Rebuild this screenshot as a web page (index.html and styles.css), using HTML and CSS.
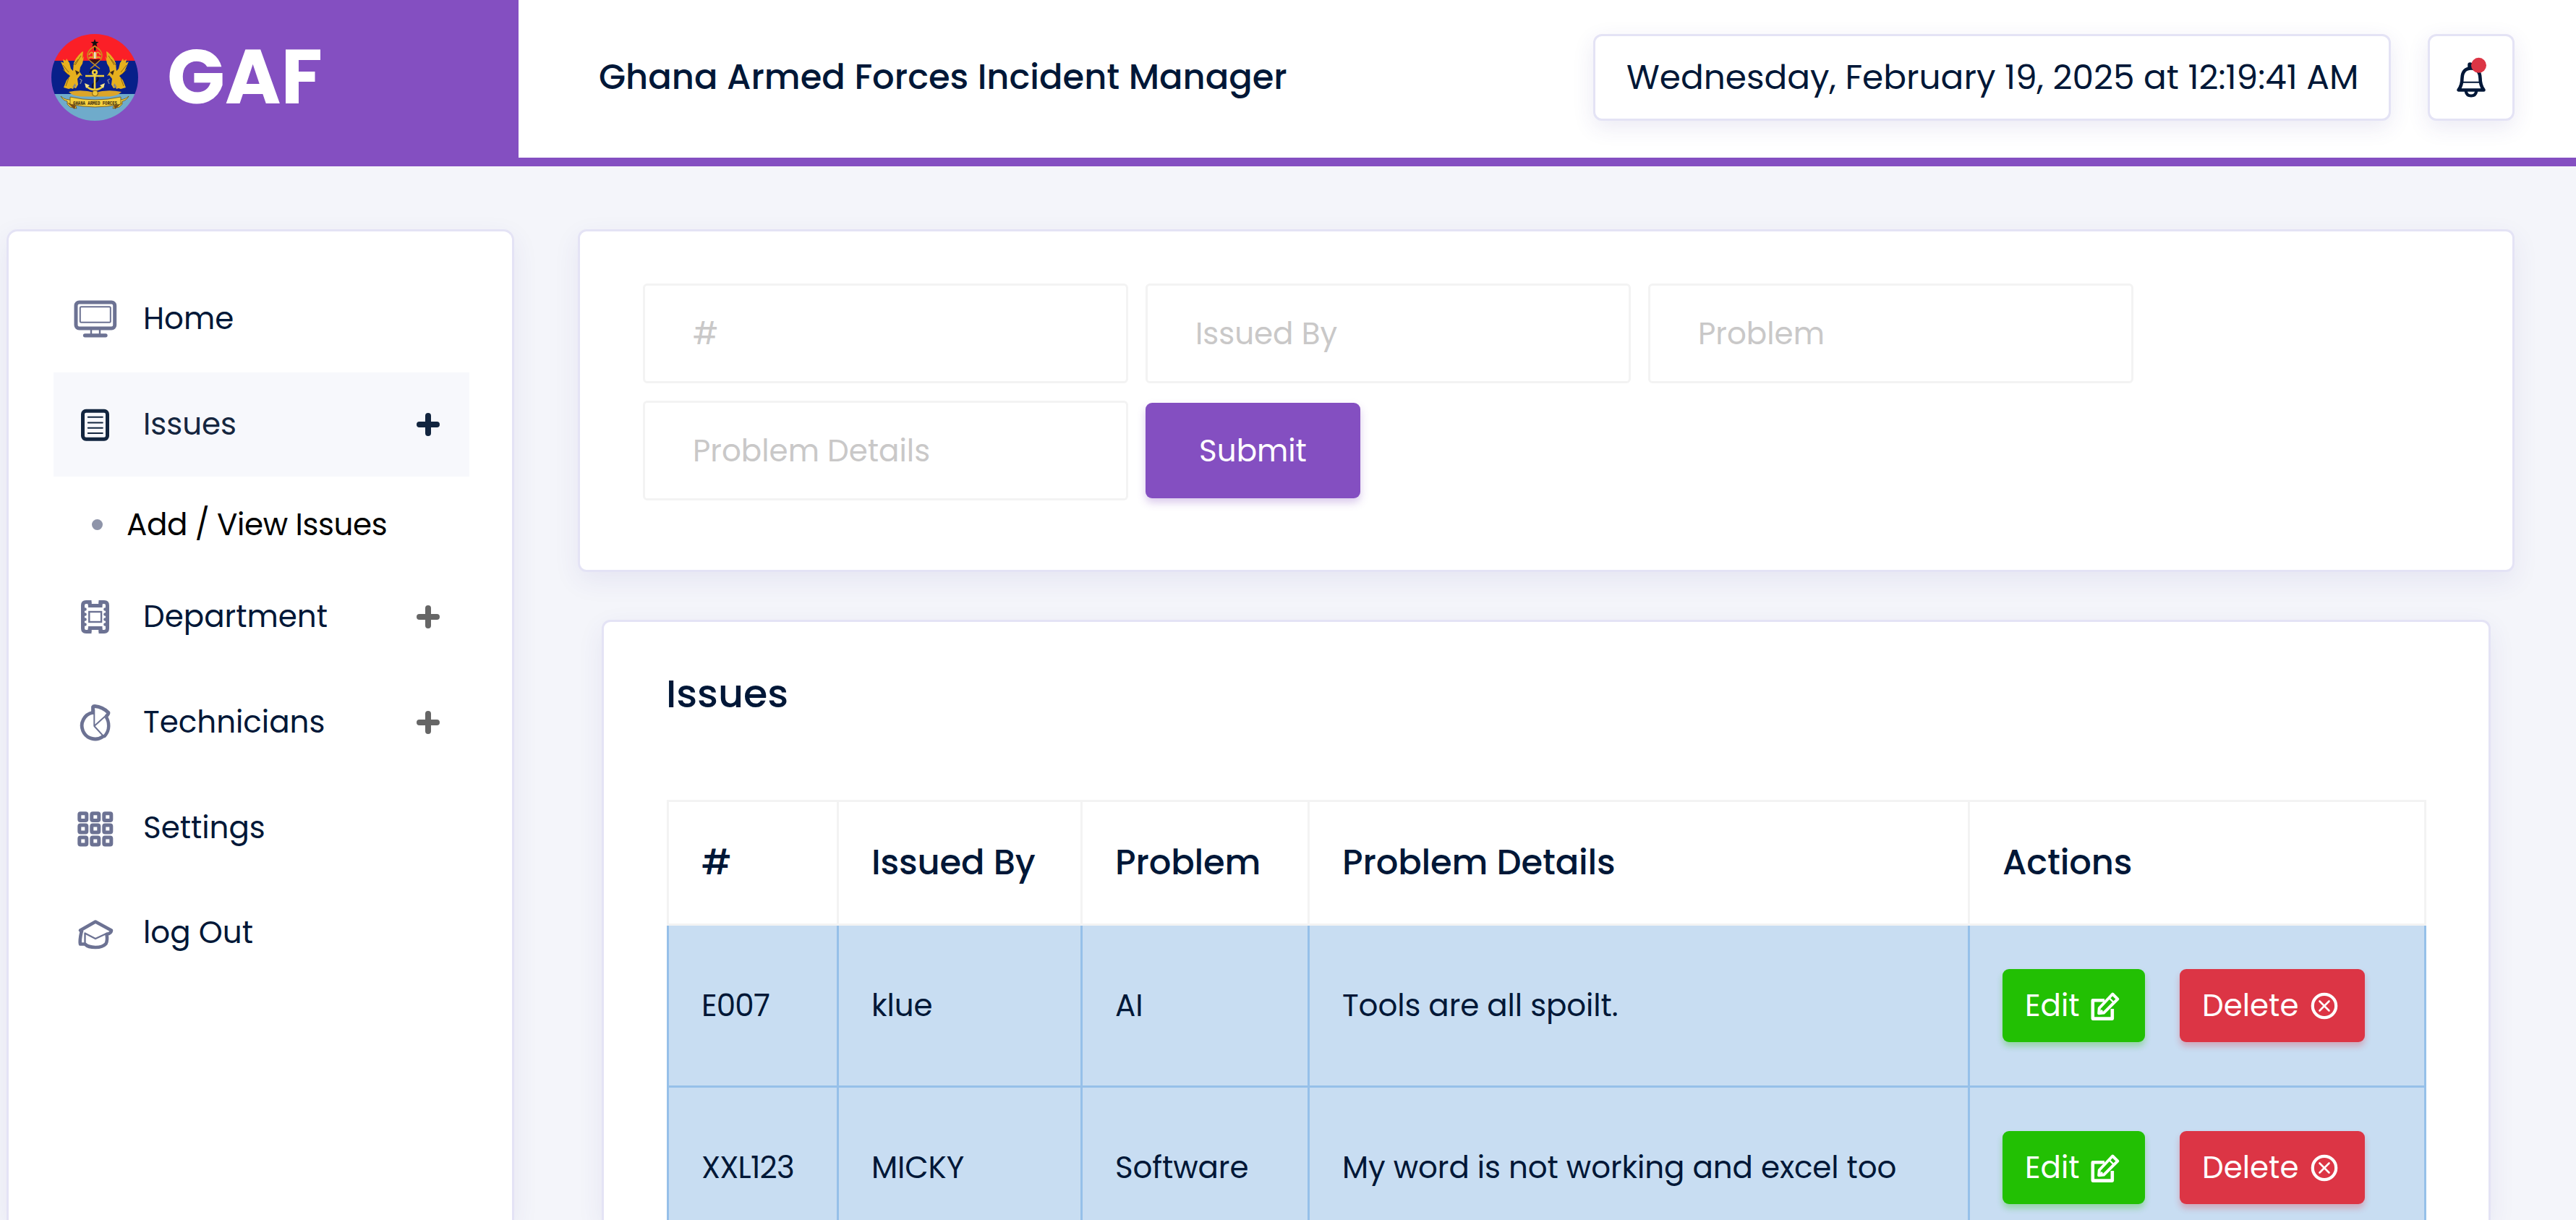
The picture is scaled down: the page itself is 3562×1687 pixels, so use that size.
FILE: index.html
```html
<!DOCTYPE html>
<html lang="en">
<head>
<meta charset="utf-8">
<title>Ghana Armed Forces Incident Manager</title>
<link rel="stylesheet" href="styles.css">
</head>
<body>
<svg class="defs" width="0" height="0" aria-hidden="true">
  <symbol id="plus" viewBox="0 0 32 32"><path d="M16 4v24M4 16h24" stroke="currentColor" stroke-width="8" stroke-linecap="round"/></symbol>
  <symbol id="edit" viewBox="0 0 40 40">
    <g fill="none" stroke="currentColor">
      <path d="M19 12.3H2.8V37.6H29.8V24" stroke-width="4.6" stroke-linejoin="round"/>
      <path d="M30.2 3.500l7 7L18 29.600l-6.800.6.600-7.200z" stroke-width="4" stroke-linejoin="round"/>
      <path d="M25.500 9l6 6" stroke-width="2.400"/>
      <path d="M11 31l5-5" stroke-width="3"/>
    </g>
  </symbol>
  <symbol id="remove" viewBox="0 0 40 40">
    <g fill="none" stroke="currentColor" stroke-linecap="round">
      <circle cx="20" cy="20" r="16.2" stroke-width="4.2"/>
      <path d="M13.500 13.500l13 13M26.500 13.500l-13 13" stroke-width="2.6"/>
    </g>
  </symbol>
</svg>

<header class="header">
  <a class="brand">
    <svg class="crest" viewBox="0 0 120 120">
      <defs><clipPath id="disc"><circle cx="60" cy="60" r="60"/></clipPath></defs>
      <g clip-path="url(#disc)">
        <path fill="#fb1f27" d="M0 0h120v37H0z"/>
        <path fill="#08208a" d="M0 37h120v46H0z"/>
        <path fill="#6fabcb" d="M0 83h120v37H0z"/>
      </g>
      <path d="M60 7l1.500 3.800 4 .2-3.200 2.500 1.200 4L60 15.200l-3.500 2.300 1.200-4-3.200-2.500 4-.2z" fill="#111"/>
      <path d="M59 17h2.500v6H59z" fill="#111"/>
      <path d="M60 17Q73 24 69 34 64 40 54 48M60 17Q47 24 51 34 56 40 67 48" fill="none" stroke="#c98f1c" stroke-width="1.500"/>
      <path d="M52 35h16l-8 6z" fill="#3c1112"/>
      <path d="M52 29q3-6 6-2v6q-3-2-6 0M68 29q-3-6-6-2v6q3-2 6 0" fill="none" stroke="#e0a42a" stroke-width="1.800"/>
      <path d="M59 25h2.500v9H59z" fill="#e8e2d0"/>
      <g id="eagle">
        <path d="M44 24l-1 10 2-3-2 10-3 5-1 6 4 6-3-1-4 5 1 8-3 5-3-1-1 2-3-1-3 1-7-2 4-10 5-6-7-6-6-14 4 2-1-5 4 2 1-3 4 6 2 8 3 3 1-11 3-6 4-5 4-4z" fill="#e6b01e"/>
        <path d="M41 30l-8 13M37 35l-7 9M16 43l8 10M16 49l7 7M24 61l-4 11" stroke="#8f6410" stroke-width="1" fill="none"/>
        <path d="M33 50l6 3-4 4z" fill="#3f2a19"/>
        <path d="M33 69l-3 5M39 62l3 2-2 5M30 74l4-3" stroke="#7e8291" stroke-width="1.500" fill="none"/>
      </g>
      <use href="#eagle" transform="matrix(-1 0 0 1 120 0)"/>
      <path d="M53 54q2-7 9-4-6 3-1 7 7 4 1 9-8 4-4 9" fill="none" stroke="#10132c" stroke-width="2"/>
      <g fill="none" stroke="#f0cf3c" stroke-width="2.600">
        <circle cx="60" cy="53" r="2.800"/>
        <path d="M60 56v20M47 58h26"/>
        <path d="M48 71q4 6 12 6t12-6"/>
      </g>
      <path d="M46 68l7 3-5 4zM74 68l-7 3 5 4z" fill="#f5e48a"/>
      <path d="M24 80q18-4 36 1 18-5 37-1-4 5-16 6.500H40Q28 85 24 80z" fill="#dca52a"/>
      <circle cx="60.500" cy="82" r="4" fill="#f0c63c" stroke="#80600e"/>
      <path d="M13 86q6 6 18 5l4 12-9-2-4-4 0-4q-6-1-9-7z" fill="#f4cf3e" stroke="#6b5018" stroke-width=".8"/>
      <path d="M107 86q-6 6-18 5l-4 12 9-2 4-4 0-4q6-1 9-7z" fill="#f4cf3e" stroke="#6b5018" stroke-width=".8"/>
      <path d="M22 95l12 3-2 6z M98 95l-12 3 2 6z" fill="#7c4c12"/>
      <path d="M26 87q34 8 70 0v10q-36 8-70 0z" fill="#f4cf3e" stroke="#6b5018" stroke-width=".8"/>
      <text x="60.500" y="98" text-anchor="middle" textLength="61" lengthAdjust="spacingAndGlyphs" class="crest-text">GHANA ARMED FORCES</text>
    </svg>
    <span class="brand-name">GAF</span>
  </a>
  <div class="topbar">
    <h1 class="title">Ghana Armed Forces Incident Manager</h1>
    <div class="clock">Wednesday, February 19, 2025 at 12:19:41 AM</div>
    <button class="bell" type="button" aria-label="Notifications">
      <svg viewBox="0 0 48 60" width="48" height="60">
        <g fill="none" stroke="#001737" stroke-linejoin="round" stroke-linecap="round">
          <path d="M6.500 47.500H41.500Q36.500 41 36.500 31 36 17.500 24 17.500T11.500 31Q11.500 41 6.500 47.500z" stroke-width="4.600"/>
          <path d="M12 36.700h24" stroke-width="1.900"/>
          <path d="M16.800 49.500q1 6 7.200 6t7.200-6" stroke-width="4.200"/>
          <path d="M22.500 15v-2.500" stroke-width="6.500"/>
        </g>
        <circle cx="34.500" cy="13.300" r="10.500" fill="#dc3545"/>
      </svg>
    </button>
  </div>
</header>

<div class="layout">
  <nav class="sidebar">
    <a class="nav-item">
      <svg class="nav-icon" viewBox="0 0 60 60"><g fill="none" stroke="currentColor">
        <rect x="3" y="7" width="53.700" height="36" rx="4.500" stroke-width="5"/>
        <rect x="8.800" y="13.300" width="42" height="21.500" rx="1.500" stroke-width="2"/>
        <path d="M24 45v6M36 45v6" stroke-width="2.400"/>
        <path d="M15.500 52.800h28.500" stroke-width="5.300" stroke-linecap="round"/></g></svg>
      <span>Home</span>
    </a>
    <a class="nav-item active">
      <svg class="nav-icon" viewBox="0 0 60 60"><g fill="none" stroke="currentColor">
        <rect x="12.500" y="11.300" width="34" height="39" rx="4.500" stroke-width="5"/>
        <path d="M19.800 19.800h20M19.800 27.500h20M19.800 34.700h20M19.800 41.900h20" stroke-width="2" stroke-linecap="round"/></g></svg>
      <span>Issues</span>
      <svg class="plus"><use href="#plus"/></svg>
    </a>
    <a class="sub-item"><i class="dot"></i>Add / View Issues</a>
    <a class="nav-item">
      <svg class="nav-icon" viewBox="0 0 60 60"><g fill="none" stroke="currentColor">
        <path d="M24.500 9.500H17Q12.500 9.500 12.500 14V46Q12.500 50.500 17 50.500H24.500M34.500 9.500H42Q46.500 9.500 46.500 14V46Q46.500 50.500 42 50.500H34.500M20 14.500H39.500M20 45.500H39.500" stroke-width="5"/>
        <path d="M22 9v5M37 9v5M22 46v5M37 46v5" stroke-width="5"/>
        <path d="M15.500 19.500h0M15.500 26.500h0M15.500 33.500h0M15.500 40.500h0M43.500 19.500h0M43.500 26.500h0M43.500 33.500h0M43.500 40.500h0" stroke-width="4.600" stroke-linecap="round"/>
        <rect x="21.300" y="23" width="16.800" height="14" stroke-width="2.400"/></g></svg>
      <span>Department</span>
      <svg class="plus"><use href="#plus"/></svg>
    </a>
    <a class="nav-item">
      <svg class="nav-icon" viewBox="0 0 60 60"><g fill="none" stroke="currentColor" stroke-linejoin="round">
        <path d="M26 16.300A18.500 18.500 0 1 0 40 49.800" stroke-width="4.800"/>
        <path d="M44.500 22Q48.500 28 48.200 35.500 48 43 42.500 49L39 49.500" stroke-width="4.500"/>
        <path d="M26.500 19V8.500Q27 7.500 29 7.500 40 8.500 48 16.500 48.500 18 44.500 22" stroke-width="4.800"/>
        <path d="M28.300 12V35L45 20M28.300 35L42 50" stroke-width="2"/></g></svg>
      <span>Technicians</span>
      <svg class="plus"><use href="#plus"/></svg>
    </a>
    <a class="nav-item">
      <svg class="nav-icon" viewBox="0 0 60 60"><g fill="none" stroke="currentColor" stroke-width="5">
        <rect x="7.800" y="9.800" width="10" height="9.600" rx="1.500"/><rect x="24.800" y="9.800" width="10" height="9.600" rx="1.500"/><rect x="41.800" y="9.800" width="10" height="9.600" rx="1.500"/>
        <rect x="7.800" y="26" width="10" height="10" rx="1.500"/><rect x="24.800" y="26" width="10" height="10" rx="1.500"/><rect x="41.800" y="26" width="10" height="10" rx="1.500"/>
        <rect x="7.800" y="43" width="10" height="10" rx="1.500"/><rect x="24.800" y="43" width="10" height="10" rx="1.500"/><rect x="41.800" y="43" width="10" height="10" rx="1.500"/></g></svg>
      <span>Settings</span>
    </a>
    <a class="nav-item">
      <svg class="nav-icon" viewBox="0 0 60 60"><g fill="none" stroke="currentColor" stroke-linejoin="round" stroke-linecap="round">
        <path d="M11 28L9 26.500 30 14.500 52 26.500Q52 30.500 45.500 32 47 40 44.500 45 40 50 30 50 20 50 15.500 45.500H9Q8 40 10.500 29" stroke-width="4.600"/>
        <path d="M15.500 45V30.500L30 38 46 30.500" stroke-width="2.400"/></g></svg>
      <span>log Out</span>
    </a>
  </nav>

  <main class="main">
    <form class="card form-card">
      <input class="field" placeholder="#">
      <input class="field" placeholder="Issued By">
      <input class="field" placeholder="Problem">
      <input class="field" placeholder="Problem Details">
      <button class="submit" type="button">Submit</button>
    </form>

    <section class="card table-card">
      <h2 class="card-title">Issues</h2>
      <table class="issues">
        <colgroup><col class="c1"><col class="c2"><col class="c3"><col class="c4"><col class="c5"></colgroup>
        <thead>
          <tr><th>#</th><th>Issued By</th><th>Problem</th><th>Problem Details</th><th>Actions</th></tr>
        </thead>
        <tbody>
          <tr>
            <td>E007</td><td>klue</td><td>AI</td><td>Tools are all spoilt.</td>
            <td><div class="actions">
              <button class="btn btn-edit" type="button">Edit<svg><use href="#edit"/></svg></button>
              <button class="btn btn-delete" type="button">Delete<svg><use href="#remove"/></svg></button>
            </div></td>
          </tr>
          <tr>
            <td>XXL123</td><td>MICKY</td><td>Software</td><td>My word is not working and excel too</td>
            <td><div class="actions">
              <button class="btn btn-edit" type="button">Edit<svg><use href="#edit"/></svg></button>
              <button class="btn btn-delete" type="button">Delete<svg><use href="#remove"/></svg></button>
            </div></td>
          </tr>
        </tbody>
      </table>
    </section>
  </main>
</div>
</body>
</html>
```
FILE: styles.css
```css
* { box-sizing: border-box; }
body {
  margin: 0;
  overflow: hidden;
  background: #f4f5fa;
  color: #001737;
  font-family: Poppins, Inter, "Noto Sans", sans-serif;
  font-size: 42px;
}
button, input { font: inherit; }
.defs { position: absolute; }

/* Header */
.header { display: flex; height: 230px; }
.brand {
  display: flex;
  gap: 40px;
  width: 717px;
  padding: 47px 0 0 71px;
  background: #844fc1;
}
.crest { width: 120px; height: 120px; }
.crest-text { font: bold 7px "Liberation Mono", monospace; fill: #3a2a10; }
.brand-name {
  color: #fff;
  font-size: 105px;
  font-weight: 700;
  line-height: 119px;
}
.topbar {
  flex: 1;
  display: flex;
  padding: 47px 85px 0 111px;
  background: #fff;
  border-bottom: 12px solid #844fc1;
}
.title {
  flex: 1;
  margin: 0;
  font-size: 48px;
  font-weight: 500;
  line-height: 120px;
}
.clock, .bell {
  height: 120px;
  border: 3px solid #e4e3f5;
  border-radius: 12px;
  background: #fff;
  box-shadow: 0 9px 30px rgba(60, 50, 150, .1);
}
.clock {
  width: 1103px;
  padding-left: 43px;
  font-size: 47px;
  line-height: 114px;
  white-space: nowrap;
}
.bell {
  display: flex;
  align-items: center;
  justify-content: center;
  width: 120px;
  margin-left: 51px;
  padding: 0;
}

/* Page frame */
.layout {
  display: flex;
  align-items: flex-start;
  gap: 88px;
  height: 1457px;
  padding: 87px 85px 0 9px;
  overflow: hidden;
}
.sidebar, .card {
  background: #fff;
  border: 3px solid #e4e3f5;
  border-radius: 15px;
  box-shadow: 0 12px 36px rgba(60, 50, 150, .08);
}
.sidebar {
  flex: none;
  width: 702px;
  height: 1370px;
  padding: 49px 59px 0 62px;
  border-bottom: 0;
  border-radius: 15px 15px 0 0;
}
.nav-item {
  display: flex;
  align-items: center;
  height: 144.6px;
  margin-bottom: 1px;
  padding: 0 41px 0 28px;
  line-height: 50px;
}
.nav-item.active { background: #f7f8fc; color: #15263f; }
.nav-icon { width: 60px; height: 60px; margin-right: 36px; color: #6c7293; }
.active .nav-icon, .active .plus { color: #12253f; }
.plus { width: 32px; height: 32px; margin-left: auto; color: #666; }
.sub-item {
  display: flex;
  align-items: center;
  height: 121px;
  padding: 9px 0 0 53px;
  color: #000;
  letter-spacing: -.4px;
}
.dot { width: 15px; height: 15px; margin-right: 33px; border-radius: 50%; background: #8e94a9; }

/* Issue form */
.main { flex: 1; min-width: 0; }
.form-card {
  display: flex;
  flex-wrap: wrap;
  align-items: center;
  align-content: flex-start;
  gap: 24px;
  height: 474px;
  padding: 72px 86px 72px 87px;
  border-radius: 12px;
}
.field {
  width: 671px;
  height: 138px;
  padding: 0 0 0 66px;
  border: 3px solid #f3f3f3;
  border-radius: 6px;
  background: #fff;
}
.field::placeholder { color: #c9c8c8; opacity: 1; }
.submit {
  width: 297px;
  height: 132px;
  padding: 0;
  border: 0;
  border-radius: 9px;
  background: #844fc1;
  color: #fff;
  box-shadow: 0 6px 12px rgba(132, 79, 193, .3);
}

/* Issue list */
.table-card {
  height: 830px;
  margin: 66px 33px 0;
  padding: 69px 86px 0 87px;
  border-bottom: 0;
  border-radius: 12px 12px 0 0;
  overflow: hidden;
}
.card-title {
  margin: 0 0 117px -1px;
  font-size: 54px;
  font-weight: 500;
  line-height: 60px;
}
.issues { width: 2433px; table-layout: fixed; border-collapse: separate; border-spacing: 0; }
.c1 { width: 238px; }
.c2 { width: 337px; }
.c3 { width: 314px; }
.c4 { width: 913px; }
.c5 { width: 631px; }
.issues th, .issues td {
  padding: 0 0 0 45px;
  border: 0 solid #f3f3f3;
  border-width: 0 3px 3px 0;
  text-align: left;
  white-space: nowrap;
}
.issues th { height: 174px; border-top-width: 3px; font-size: 48px; font-weight: 500; letter-spacing: -.15px; }
.issues td { height: 224px; border-color: #96c0e9; background: #c8ddf2; letter-spacing: -.1px; }
.issues th:first-child, .issues td:first-child { border-left-width: 3px; }
.issues td:first-child { letter-spacing: -.8px; }
.actions { display: flex; gap: 48px; }
.btn {
  display: flex;
  align-items: center;
  height: 101px;
  padding: 0 0 0 31px;
  border: 0;
  border-radius: 9px;
  color: #fff;
}
.btn svg { width: 40px; height: 40px; }
.btn-edit { width: 197px; background: #22c003; box-shadow: 0 6px 9px rgba(34, 192, 3, .3); }
.btn-edit svg { margin-left: 15px; }
.btn-delete { width: 256px; background: #dc3545; box-shadow: 0 6px 9px rgba(220, 53, 69, .3); }
.btn-delete svg { margin-left: 16px; }
```
